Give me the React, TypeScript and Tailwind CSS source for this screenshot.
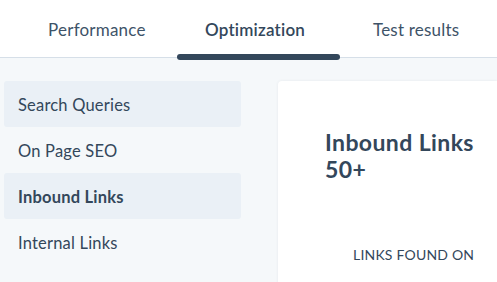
import React from "react";

export default function App() {
  const items = [
    { label: "Search Queries", active: true, bold: false },
    { label: "On Page SEO", active: false, bold: false },
    { label: "Inbound Links", active: true, bold: true },
    { label: "Internal Links", active: false, bold: false },
  ];
  return (
    <div className="h-[282px] w-full overflow-hidden bg-[#f5f8fa] text-[#33475b] font-['Lato',sans-serif]">
      <div className="relative h-[58px] bg-white border-b border-[#d6dfe8]">
        <div className="flex h-full items-center pl-[19px] pt-[3px]">
          <div className="w-[158px] text-center text-[17px] tracking-[0.2px] text-[#3e5368]">Performance</div>
          <div className="relative w-[163px] h-full flex items-center justify-center text-[17px] tracking-[0.2px] font-semibold text-[#33475b]">
            Optimization
          </div>
          <div className="w-[164px] text-center text-[17px] tracking-[0.2px] text-[#3e5368]">Test results</div>
        </div>
        <div className="absolute left-[177px] w-[163px] bottom-[-3px] h-[6px] rounded-[3px] bg-[#33475b]" />
      </div>
      <div className="flex pt-[23px]">
        <div className="w-[237px] ml-[4px] flex flex-col">
          {items.map((it) => (
            <div
              key={it.label}
              className={`h-[46px] flex items-center pl-[14px] pt-[2px] rounded-[3px] text-[16.5px] tracking-[0.2px] ${it.active ? "bg-[#eaf0f6]" : ""} ${it.bold ? "font-bold" : ""}`}
            >
              {it.label}
            </div>
          ))}
        </div>
        <div className="ml-[37px] flex-1 h-[220px] bg-white rounded-tl-[4px] shadow-[0_0_3px_rgba(45,62,80,0.08)]">
          <div className="pl-[47px] pt-[48px] text-[23px] leading-[27px] tracking-[0.4px] font-bold text-[#33475b]">
            <div>Inbound Links</div>
            <div>50+</div>
          </div>
          <div className="pl-[75px] mt-[62px] text-[14px] leading-[20px] tracking-[0.2px] uppercase text-[#33475b]">
            Links found on
          </div>
        </div>
      </div>
    </div>
  );
}
